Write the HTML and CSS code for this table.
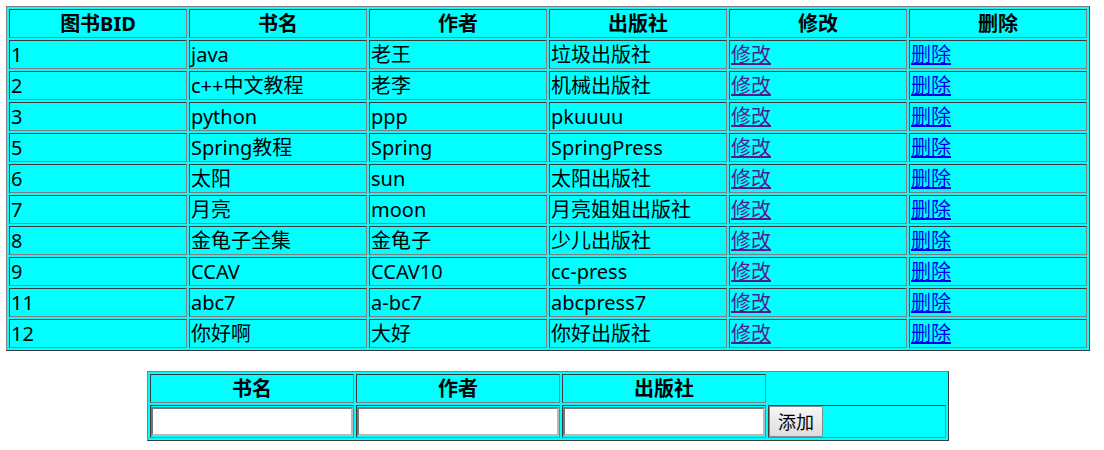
FILE: index.html
```html
<!DOCTYPE html>
<html lang="zh">
<head>
<meta charset="utf-8">
<title>图书列表</title>
<link rel="stylesheet" href="styles.css">
</head>
<body>
<div class="page">
  <table class="grid books">
    <thead>
      <tr><th>图书BID</th><th>书名</th><th>作者</th><th>出版社</th><th>修改</th><th>删除</th></tr>
    </thead>
    <tbody>
      <tr><td>1</td><td>java</td><td>老王</td><td>垃圾出版社</td><td><a class="visited" href="#">修改</a></td><td><a href="#">删除</a></td></tr>
      <tr><td>2</td><td>c++中文教程</td><td>老李</td><td>机械出版社</td><td><a class="visited" href="#">修改</a></td><td><a href="#">删除</a></td></tr>
      <tr><td>3</td><td>python</td><td>ppp</td><td>pkuuuu</td><td><a class="visited" href="#">修改</a></td><td><a href="#">删除</a></td></tr>
      <tr><td>5</td><td>Spring教程</td><td>Spring</td><td>SpringPress</td><td><a class="visited" href="#">修改</a></td><td><a href="#">删除</a></td></tr>
      <tr><td>6</td><td>太阳</td><td>sun</td><td>太阳出版社</td><td><a class="visited" href="#">修改</a></td><td><a href="#">删除</a></td></tr>
      <tr><td>7</td><td>月亮</td><td>moon</td><td>月亮姐姐出版社</td><td><a class="visited" href="#">修改</a></td><td><a href="#">删除</a></td></tr>
      <tr><td>8</td><td>金龟子全集</td><td>金龟子</td><td>少儿出版社</td><td><a class="visited" href="#">修改</a></td><td><a href="#">删除</a></td></tr>
      <tr><td>9</td><td>CCAV</td><td>CCAV10</td><td>cc-press</td><td><a class="visited" href="#">修改</a></td><td><a href="#">删除</a></td></tr>
      <tr><td>11</td><td>abc7</td><td>a-bc7</td><td>abcpress7</td><td><a class="visited" href="#">修改</a></td><td><a href="#">删除</a></td></tr>
      <tr><td>12</td><td>你好啊</td><td>大好</td><td>你好出版社</td><td><a class="visited" href="#">修改</a></td><td><a href="#">删除</a></td></tr>
    </tbody>
  </table>

  <form class="add-form" action="#">
    <table class="grid adder">
      <tr><th class="wide">书名</th><th class="wide">作者</th><th class="wide">出版社</th></tr>
      <tr class="inputs">
        <td class="wide"><input class="field" type="text"></td>
        <td class="wide"><input class="field" type="text"></td>
        <td class="wide"><input class="field" type="text"></td>
        <td class="narrow"><button class="btn" type="button">添加</button></td>
      </tr>
    </table>
  </form>
</div>
</body>
</html>
```
FILE: styles.css
```css
body {
  margin: 6px;
  background: #ffffff;
  font-family: "Noto Sans", "Noto Sans CJK SC", sans-serif;
  font-size: 20px;
  color: #000;
}

.page {
  width: 1084px;
}

.grid {
  border-collapse: separate;
  border-spacing: 2px;
  background: #00ffff;
  border-width: 1px;
  border-style: solid;
  border-color: #808080 #3c3c3c #3c3c3c #808080;
}

.grid th,
.grid td {
  padding: 1px 0 0 1px;
  height: 26px;
  line-height: 26px;
  border-width: 1px;
  border-style: solid;
  border-color: #3c3c3c #808080 #808080 #3c3c3c;
  white-space: nowrap;
  overflow: hidden;
}

.grid th {
  font-weight: bold;
  text-align: center;
  padding: 1px 0 0;
}

.grid td {
  text-align: left;
}

.books {
  width: 1084px;
  table-layout: fixed;
}

.books th {
  width: 176px;
}

.books td {
  width: 175px;
}

.grid a {
  color: #0000ee;
  text-decoration: underline;
}

.grid a.visited {
  color: #551a8b;
}

.add-form {
  margin: 20px 0 0;
}

.adder {
  width: 802px;
  margin: 0 auto;
}

.adder .wide {
  width: 202px;
}

.adder .narrow {
  width: 176px;
}

.adder .inputs td {
  height: 31px;
  line-height: 31px;
  vertical-align: middle;
  padding: 0;
}

.field {
  display: block;
  box-sizing: border-box;
  width: 202px;
  height: 29px;
  margin: 0;
  padding: 0 2px;
  background: #fff;
  border-width: 2px;
  border-style: solid;
  border-color: #777777 #b8b8b8 #b8b8b8 #777777;
  font-family: "Noto Sans", "Noto Sans CJK SC", sans-serif;
  font-size: 18px;
}

.btn {
  display: block;
  box-sizing: border-box;
  width: 54px;
  height: 31px;
  margin: 0;
  padding: 0;
  border: 1px solid #8a8a8a;
  border-radius: 2px;
  background: linear-gradient(#f6f6f6, #dddddd);
  font-family: "Noto Sans CJK SC", sans-serif;
  font-size: 18px;
  line-height: 29px;
  color: #000;
}
```
